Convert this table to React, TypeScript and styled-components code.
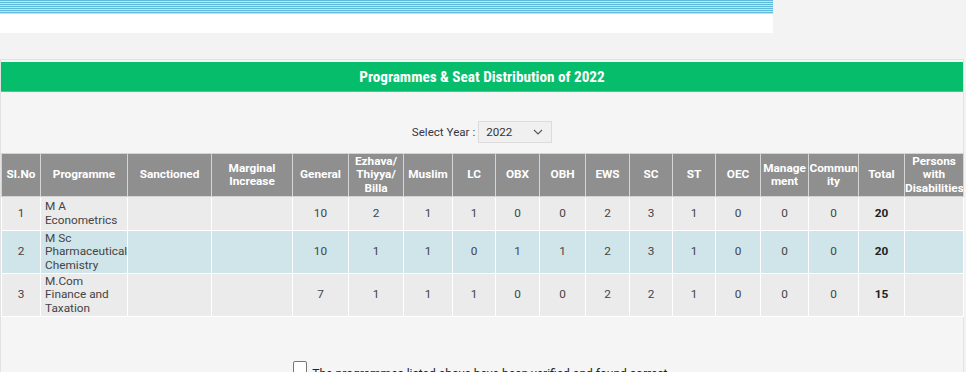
import React from 'react';
import styled, { createGlobalStyle } from 'styled-components';

const GlobalStyle = createGlobalStyle`
  body {
    margin: 0;
    background: #f3f3f4;
    font-family: Roboto, "Liberation Sans", sans-serif;
    overflow: hidden;
  }
`;

const columns = [
  { label: ['Sl.No'], width: 39 },
  { label: ['Programme'], width: 87 },
  { label: ['Sanctioned'], width: 84 },
  { label: ['Marginal', 'Increase'], width: 81 },
  { label: ['General'], width: 56 },
  { label: ['Ezhava/', 'Thiyya/', 'Billa'], width: 55 },
  { label: ['Muslim'], width: 49 },
  { label: ['LC'], width: 43 },
  { label: ['OBX'], width: 44 },
  { label: ['OBH'], width: 46 },
  { label: ['EWS'], width: 44 },
  { label: ['SC'], width: 43 },
  { label: ['ST'], width: 43 },
  { label: ['OEC'], width: 45 },
  { label: ['Manage', 'ment'], width: 48 },
  { label: ['Commun', 'ity'], width: 50 },
  { label: ['Total'], width: 46 },
  { label: ['Persons', 'with', 'Disabilities'], width: 59 },
];

const rows = [
  { no: 1, prog: ['M A', 'Econometrics'], nums: [10, 2, 1, 1, 0, 0, 2, 3, 1, 0, 0, 0], total: 20, height: 34 },
  { no: 2, prog: ['M Sc', 'Pharmaceutical', 'Chemistry'], nums: [10, 1, 1, 0, 1, 1, 2, 3, 1, 0, 0, 0], total: 20, height: 43 },
  { no: 3, prog: ['M.Com', 'Finance and', 'Taxation'], nums: [7, 1, 1, 1, 0, 0, 2, 2, 1, 0, 0, 0], total: 15, height: 43 },
];

const App = () => {
  return (
    <>
      <GlobalStyle />
      <TopBanner>
        <Stripes />
      </TopBanner>
      <Panel>
        <Title>Programmes &amp; Seat Distribution of 2022</Title>
        <YearRow>
          <YearLabel>Select Year :</YearLabel>
          <YearSelect>
            <span>2022</span>
            <svg width="10" height="6" viewBox="0 0 10 6">
              <path d="M1 1 L5 5 L9 1" fill="none" stroke="#555" strokeWidth="1.1" />
            </svg>
          </YearSelect>
        </YearRow>
        <SeatTable>
          <colgroup>
            {columns.map((c, i) => (
              <col key={i} style={{ width: c.width }} />
            ))}
          </colgroup>
          <thead>
            <tr>
              {columns.map((c, i) => (
                <Th key={i}>
                  {c.label.map((l, j) => (
                    <React.Fragment key={j}>
                      {j > 0 && <br />}
                      {l}
                    </React.Fragment>
                  ))}
                </Th>
              ))}
            </tr>
          </thead>
          <tbody>
            {rows.map((r, i) => (
              <Row key={r.no} $alt={i === 1} style={{ height: r.height }}>
                <Td>{r.no}</Td>
                <ProgTd>
                  {r.prog.map((p, j) => (
                    <div key={j}>{p}</div>
                  ))}
                </ProgTd>
                <Td></Td>
                <Td></Td>
                {r.nums.map((n, j) => (
                  <Td key={j}>{n}</Td>
                ))}
                <Td $bold>{r.total}</Td>
                <Td></Td>
              </Row>
            ))}
          </tbody>
        </SeatTable>
        <Confirm>
          <CheckBox />
          <ConfirmText>The programmes listed above have been verified and found correct.</ConfirmText>
        </Confirm>
      </Panel>
    </>
  );
};

export default App;

const TopBanner = styled.div`
  width: 773px;
  height: 33px;
  background: #ffffff;
`;

const Stripes = styled.div`
  height: 14px;
  background: repeating-linear-gradient(
    to bottom,
    #5fbadb 0px,
    #5fbadb 1px,
    #bde5f3 1px,
    #bde5f3 2px
  );
`;

const Panel = styled.div`
  margin-top: 26px;
  width: 964px;
  box-sizing: border-box;
  border: 1px solid #e2e2e2;
  background: #f5f5f5;
  padding: 2px 0 40px 0;
`;

const Title = styled.div`
  height: 29px;
  background: #06bd6c;
  color: #ffffff;
  display: flex;
  align-items: center;
  justify-content: center;
  font-family: "Liberation Sans Narrow", "Roboto", sans-serif;
  font-stretch: condensed;
  font-weight: bold;
  font-size: 15.2px;
  border-bottom: 1px solid #3fcf8c;
`;

const YearRow = styled.div`
  display: flex;
  justify-content: center;
  align-items: center;
  gap: 3px;
  margin-top: 29px;
  height: 22px;
`;

const YearLabel = styled.span`
  font-size: 11.6px;
  color: #353545;
`;

const YearSelect = styled.div`
  width: 74px;
  height: 22px;
  box-sizing: border-box;
  border: 1px solid #dcdcdc;
  background: #f0f0f0;
  display: flex;
  align-items: center;
  justify-content: space-between;
  padding: 0 8px 0 7px;
  font-size: 11.6px;
  color: #333;
`;

const SeatTable = styled.table`
  margin-top: 10px;
  border-collapse: collapse;
  table-layout: fixed;
  width: 962px;
  font-size: 11.8px;
`;

const Th = styled.th`
  background: #8f8f8f;
  color: #ffffff;
  font-weight: bold;
  font-size: 11.8px;
  line-height: 13.5px;
  height: 42px;
  padding: 0;
  border: 1px solid #d4d4d4;
  text-align: center;
  vertical-align: middle;
  white-space: nowrap;
  overflow: hidden;
`;

const Row = styled.tr<{ $alt: boolean }>`
  background: ${p => (p.$alt ? '#cfe5ea' : '#ebebeb')};
`;

const Td = styled.td<{ $bold?: boolean }>`
  border: 1px solid #ffffff;
  padding: 0 2px;
  color: #444;
  line-height: 13.5px;
  text-align: center;
  vertical-align: middle;
  font-weight: ${p => (p.$bold ? 'bold' : 'normal')};
  ${p => p.$bold && 'color: #222;'}
`;

const ProgTd = styled(Td)`
  text-align: left;
  padding-left: 4px;
  white-space: nowrap;
  overflow: hidden;
`;

const Confirm = styled.div`
  display: flex;
  justify-content: center;
  align-items: flex-start;
  margin-top: 44px;
  gap: 5px;
`;

const CheckBox = styled.span`
  width: 14px;
  height: 14px;
  box-sizing: border-box;
  border: 1px solid #767676;
  border-radius: 2px;
  background: #ffffff;
  flex-shrink: 0;
`;

const ConfirmText = styled.span`
  font-size: 12px;
  color: #222;
  margin-top: 6px;
`;
